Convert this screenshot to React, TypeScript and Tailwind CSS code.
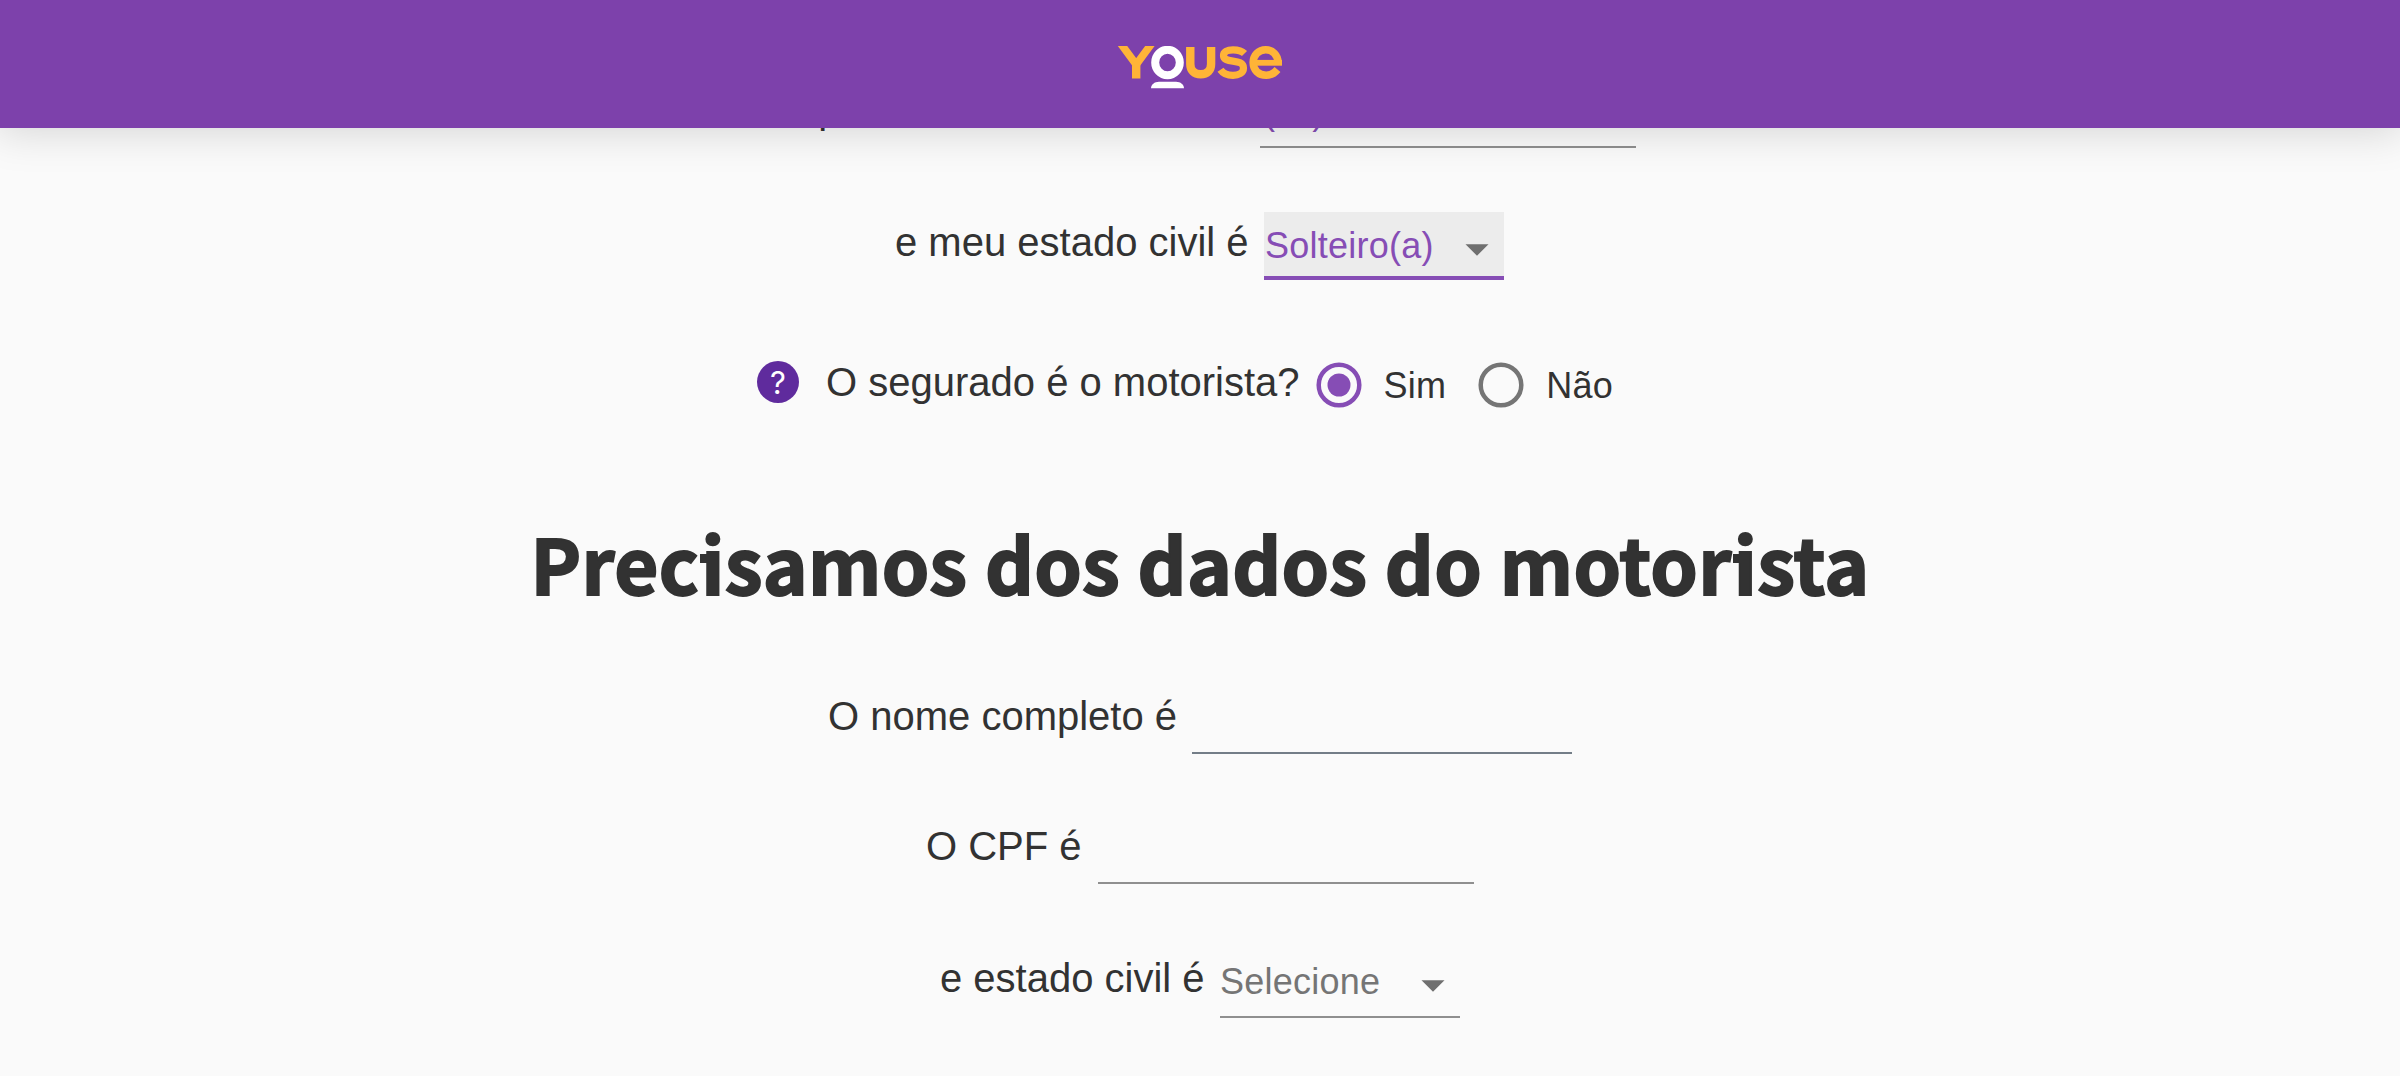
import React from "react";

function Arrow() {
  return (
    <svg className="h-[12px] w-[24px]" viewBox="0 0 24 12" fill="#6f6f6f">
      <path d="M0.5 0.3H23.5L12 11.8Z" />
    </svg>
  );
}

function Radio({ checked }: { checked?: boolean }) {
  return (
    <svg className="size-[46px]" viewBox="0 0 46 46" fill="none">
      <circle cx="23" cy="23" r="20.3" stroke={checked ? "#864db5" : "#757575"} strokeWidth="4.5" />
      {checked && <circle cx="23" cy="23" r="11.5" fill="#864db5" />}
    </svg>
  );
}

/* Letter "i" with the small slab at the top left of its stem. */
function SlabI() {
  return (
    <span className="relative ml-[2px] inline-block before:absolute before:left-[-1px] before:top-[42px] before:h-[9px] before:w-[9px] before:bg-[#323232] before:content-['']">
      i
    </span>
  );
}

function Logo() {
  return (
    <svg className="h-[43px] w-[166px] overflow-hidden" viewBox="0 1 166 43" fill="none">
      <g stroke="#ffb437" strokeWidth="8.4">
        <path strokeWidth="7.6" d="M2.2 -3.5L19.2 19.500L36.2 -3.5" />
        <path d="M19.2 17V33.500" />
        <path d="M73.300 2V19C73.300 25.500 77 29.300 83.700 29.300S94.100 25.500 94.100 19V2" />
        <path strokeWidth="7.200" d="M127.500 8.500C125 6 120.500 4.800 116 4.800C110 4.800 106.500 7 106.500 10.500C106.500 19.500 126.500 12.500 126.500 23C126.500 28 121.500 30.400 116 30.400C110.500 30.400 106 28.500 103.500 24.800" />
        <path strokeWidth="5.800" d="M138 17.800H165" />
        <path strokeWidth="7.600" d="M161 19.500V17.500C161 10 155.500 4.800 148.700 4.800C141.500 4.800 136.200 10.300 136.200 17.500C136.200 25 141.500 30.200 149.200 30.200C154 30.200 157.500 28.200 160.500 24.500" />
      </g>
      <ellipse cx="50.500" cy="17.500" rx="12.300" ry="12.700" stroke="#fff" strokeWidth="8" />
      <path fill="#fff" d="M34 43.300C34 39.500 37.500 36.700 42 36.700H59C63.500 36.700 67 39.500 67 43.300Z" />
    </svg>
  );
}

export default function App() {
  return (
    <div className="relative h-[1076px] w-[2400px] overflow-hidden bg-[#fafafa] font-['Liberation_Sans',Arial,sans-serif] text-[40px] leading-[46px] text-[#323232]">
      <header className="relative z-10 flex h-[128px] items-start justify-center bg-[#7d41ab] pt-[46px] shadow-[0_0_40px_4px_rgba(0,0,0,0.15)]">
        <Logo />
      </header>
      <main className="flex flex-col items-center whitespace-nowrap">
        <div className="-mt-[60px] flex h-[80px] w-[872px] justify-between">
          <span className="pl-[3px] pt-[18px]">Depois o telefone é</span>
          <div className="w-[376px] border-b-2 border-[#8f8f8f] pl-[3px] pt-[23px] text-[36px] leading-[42px] text-[#864db5]">(11)</div>
        </div>

        <div className="mt-[64px] mr-[2px] flex h-[68px] w-[610px] justify-between">
          <span className="pl-px pt-[7px]">e meu estado civil é</span>
          <div className="flex w-[240px] items-start justify-between border-b-4 border-[#864db5] bg-[#ececec] pl-px pr-[15px]">
            <span className="pt-[13px] text-[36px] leading-[42px] tracking-[0.25px] text-[#864db5]">Solteiro(a)</span>
            <span className="flex pt-[32px]"><Arrow /></span>
          </div>
        </div>

        <div className="mt-[80px] flex h-[50px] w-[886px]">
          <span className="mt-px flex size-[42px] items-center justify-center rounded-full bg-[#5f2b9d] font-['Inter',sans-serif] text-[31px] leading-none text-white">?</span>
          <span className="ml-[27px] -mt-px">O segurado é o motorista?</span>
          <span className="ml-[16px] mt-[2px]"><Radio checked /></span>
          <span className="ml-[22px] mt-[5px] text-[36px] leading-[42px] tracking-[0.2px]">Sim</span>
          <span className="ml-[32px] mt-[2px]"><Radio /></span>
          <span className="ml-[22px] mt-[5px] text-[36px] leading-[42px] tracking-[0.3px]">Não</span>
        </div>

        <h1 className="mt-[102px] h-[106px] font-['Noto_Sans_CJK_JP',sans-serif] text-[76px] leading-[100px] font-bold tracking-[0.4px] [-webkit-text-stroke:2px_#323232]">
          Prec<SlabI />samos dos dados do motor<SlabI />sta
        </h1>

        <div className="mt-[64px] flex h-[72px] w-[744px] justify-between">
          <span className="pt-[11px]">O nome completo é</span>
          <span className="w-[380px] border-b-2 border-[#737d87]" />
        </div>
        <div className="mt-[58px] flex h-[72px] w-[548px] justify-between">
          <span className="pt-[11px]">O CPF é</span>
          <span className="w-[376px] border-b-2 border-[#8f8f8f]" />
        </div>
        <div className="mt-[62px] flex h-[72px] w-[520px] justify-between">
          <span className="pt-[9px]">e estado civil é</span>
          <div className="flex w-[240px] items-start justify-between border-b-2 border-[#8f8f8f] pr-[15px]">
            <span className="pt-[15px] text-[36px] leading-[42px] tracking-[0.25px] text-[#757575]">Selecione</span>
            <span className="flex pt-[34px]"><Arrow /></span>
          </div>
        </div>
      </main>
    </div>
  );
}
